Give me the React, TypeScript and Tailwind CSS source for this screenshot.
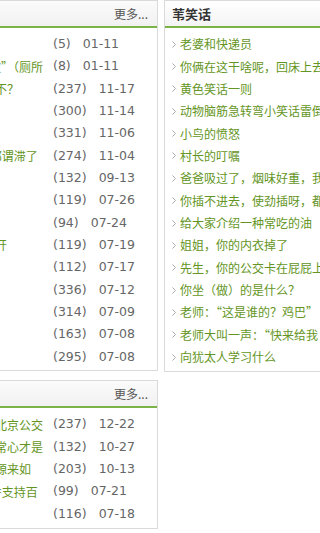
import React from 'react'

const CJK = '"Noto Sans CJK SC", "Noto Sans", sans-serif'
const NUM = '"DejaVu Sans", Verdana, sans-serif'

type Row = { title: string; count: number; date: string }

const LIST_A: Row[] = [
  { title: '一对夫妻去看电影', count: 5, date: '01-11' },
  { title: '老师问：“什么叫做”（厕所', count: 8, date: '01-11' },
  { title: '你知道这是什么吗不？', count: 237, date: '11-17' },
  { title: '女人的心思', count: 300, date: '11-14' },
  { title: '爱情那点事', count: 331, date: '11-06' },
  { title: '这下可把他们3个都谓滞了', count: 274, date: '11-04' },
  { title: '老公的秘密', count: 132, date: '09-13' },
  { title: '小明上学', count: 119, date: '07-26' },
  { title: '师傅问徒弟', count: 94, date: '07-24' },
  { title: '女孩子晚上不要乱开', count: 119, date: '07-19' },
  { title: '医生的回答', count: 112, date: '07-17' },
  { title: '聪明的儿子', count: 336, date: '07-12' },
  { title: '结婚那天', count: 314, date: '07-09' },
  { title: '考试作弊', count: 163, date: '07-08' },
  { title: '老王的烦恼', count: 295, date: '07-08' },
]

const LIST_B: Row[] = [
  { title: '一位老人每天都坐北京公交', count: 237, date: '12-22' },
  { title: '做人就要有一颗平常心才是', count: 132, date: '10-27' },
  { title: '他才终于明白了财源来如', count: 203, date: '10-13' },
  { title: '请大家继续关注1并支持百', count: 99, date: '07-21' },
  { title: '冷笑话', count: 116, date: '07-18' },
]

const JOKES = [
  '老婆和快递员',
  '你俩在这干啥呢，回床上去',
  '黄色笑话一则',
  '动物脑筋急转弯小笑话雷倒',
  '小鸟的愤怒',
  '村长的叮嘱',
  '爸爸吸过了，烟味好重，我',
  '你插不进去，使劲插呀，都',
  '给大家介绍一种常吃的油',
  '姐姐，你的内衣掉了',
  '先生，你的公交卡在屁屁上',
  '你坐（做）的是什么？',
  '老师：“这是谁的？鸡巴”',
  '老师大叫一声：“快来给我',
  '向犹太人学习什么',
]

function MoreHeader() {
  return (
    <div className="h-[25px] flex items-center justify-end pr-[9px] bg-gradient-to-b from-[#fbfbfb] to-[#f1f1f1] border-b-2 border-[#7bb446] box-content">
      <span className="text-[12px] text-[#555]" style={{ fontFamily: CJK }}>
        更多...
      </span>
    </div>
  )
}

function CountList({ rows }: { rows: Row[] }) {
  return (
    <div>
      {rows.map((r, i) => (
        <div key={i} className="h-[22.36px] flex items-center pl-2">
          <span
            className="w-[146px] shrink-0 overflow-hidden whitespace-nowrap text-[12px] text-[#649524]"
            style={{ fontFamily: CJK }}
          >
            {r.title}
          </span>
          <span className="ml-2 text-[12.5px] text-[#666] whitespace-nowrap" style={{ fontFamily: NUM }}>
            ({r.count})<span className="ml-3">{r.date}</span>
          </span>
        </div>
      ))}
    </div>
  )
}

function Chevron() {
  return (
    <svg width="4" height="7" viewBox="0 0 4 7" className="shrink-0">
      <polyline points="0.5,0.5 3.5,3.5 0.5,6.5" fill="none" stroke="#a8a8a8" strokeWidth="1" />
    </svg>
  )
}

export default function App() {
  return (
    <div className="w-[320px] h-[533px] overflow-hidden bg-white">
      <div className="flex w-[700px] -ml-[110px] gap-[6px]">
        {/* left column */}
        <div className="w-[268px] shrink-0 flex flex-col gap-[9px]">
          <div className="border border-[#dadada] bg-white">
            <MoreHeader />
            <div className="pt-[5px] pb-[2px]">
              <CountList rows={LIST_A} />
            </div>
          </div>
          <div className="border border-[#dadada] bg-white">
            <MoreHeader />
            <div className="pt-[5px] pb-[3px]">
              <CountList rows={LIST_B} />
            </div>
          </div>
        </div>

        {/* right column */}
        <div className="w-[300px] shrink-0">
          <div className="border border-[#dadada] bg-white">
            <div className="h-[25px] flex items-center pl-[7px] bg-gradient-to-b from-white to-[#f4f4f4] border-b-2 border-[#7bb446] box-content">
              <span className="text-[13px] font-bold text-[#333]" style={{ fontFamily: CJK }}>
                苇笑话
              </span>
            </div>
            <div className="pt-[5px] pb-[3px]">
              {JOKES.map((t, i) => (
                <div key={i} className="h-[22.36px] flex items-center pl-[7px] gap-[4px]">
                  <Chevron />
                  <span
                    className="whitespace-nowrap text-[12px] text-[#649524]"
                    style={{ fontFamily: CJK }}
                  >
                    {t}
                  </span>
                </div>
              ))}
            </div>
          </div>
        </div>
      </div>
    </div>
  )
}
